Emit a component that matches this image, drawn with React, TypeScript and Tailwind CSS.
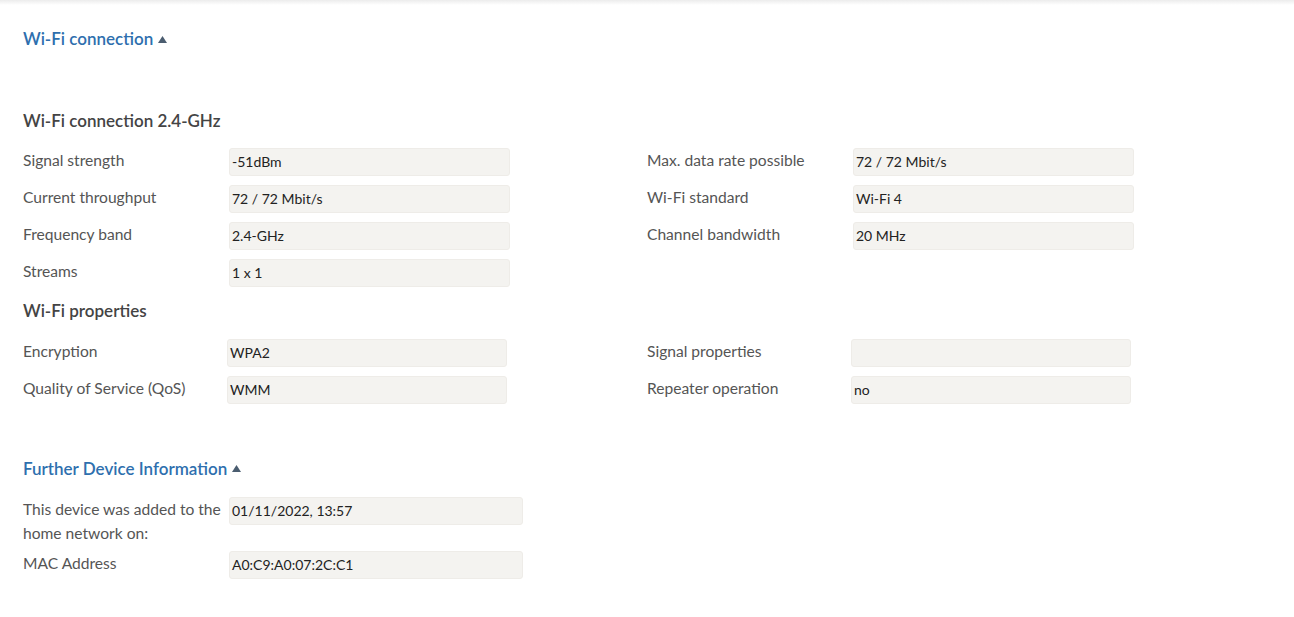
import React from 'react';

type Row = { label: string; value: string };

const left24: Row[] = [
  { label: 'Signal strength', value: '-51dBm' },
  { label: 'Current throughput', value: '72 / 72 Mbit/s' },
  { label: 'Frequency band', value: '2.4-GHz' },
  { label: 'Streams', value: '1 x 1' },
];

const right24: Row[] = [
  { label: 'Max. data rate possible', value: '72 / 72 Mbit/s' },
  { label: 'Wi-Fi standard', value: 'Wi-Fi 4' },
  { label: 'Channel bandwidth', value: '20 MHz' },
];

const leftProps: Row[] = [
  { label: 'Encryption', value: 'WPA2' },
  { label: 'Quality of Service (QoS)', value: 'WMM' },
];

const rightProps: Row[] = [
  { label: 'Signal properties', value: '' },
  { label: 'Repeater operation', value: 'no' },
];

function Field({ label, value, labelW, boxW }: Row & { labelW: string; boxW: string }) {
  return (
    <div className="flex items-start">
      <div className={`${labelW} shrink-0 pt-[1px] text-[15.6px] leading-[23px] text-[#555]`}>{label}</div>
      <div
        className={`${boxW} h-[28px] shrink-0 rounded-[3px] border border-[#eeece8] bg-[#f4f3f0] px-[2px] text-[14px] leading-[26px] text-[#222]`}
      >
        {value}
      </div>
    </div>
  );
}

function Toggle({ title }: { title: string }) {
  return (
    <button type="button" className="flex items-center gap-[5px] text-[17px] font-semibold text-[#2e6fae]">
      <span>{title}</span>
      <svg width="9" height="7" viewBox="0 0 9 7" className="mt-[1px]">
        <path d="M4.5 0L9 7H0z" fill="#4b5d70" />
      </svg>
    </button>
  );
}

function Column({ rows, labelW, boxW }: { rows: Row[]; labelW: string; boxW: string }) {
  return (
    <div className="flex w-[624px] flex-col gap-[9px]">
      {rows.map((r) => (
        <Field key={r.label} {...r} labelW={labelW} boxW={boxW} />
      ))}
    </div>
  );
}

export default function App() {
  return (
    <div className="min-h-[617px] bg-white font-['Lato','Liberation_Sans',sans-serif] text-[#444]">
      <div className="h-[5px] bg-gradient-to-b from-[#ececec] to-white" />
      <div className="px-[23px]">
        <div className="pt-[21px]">
          <Toggle title="Wi-Fi connection" />
        </div>

        <h3 className="mt-[56px] text-[17px] font-semibold text-[#444]">Wi-Fi connection 2.4-GHz</h3>
        <div className="mt-[15px] flex">
          <Column rows={left24} labelW="w-[206px]" boxW="w-[281px]" />
          <Column rows={right24} labelW="w-[206px]" boxW="w-[281px]" />
        </div>

        <h3 className="mt-[11px] text-[17px] font-semibold text-[#444]">Wi-Fi properties</h3>
        <div className="mt-[15px] flex">
          <Column rows={leftProps} labelW="w-[204px]" boxW="w-[280px]" />
          <Column rows={rightProps} labelW="w-[204px]" boxW="w-[280px]" />
        </div>

        <div className="mt-[52px]">
          <Toggle title="Further Device Information" />
        </div>
        <div className="mt-[16px] flex w-[624px] flex-col gap-[6px]">
          <div className="flex items-start">
            <div className="w-[206px] shrink-0 text-[15.6px] leading-[24px] text-[#555]">
              This device was added to the home network on:
            </div>
            <div className="h-[28px] w-[294px] shrink-0 rounded-[3px] border border-[#eeece8] bg-[#f4f3f0] px-[2px] text-[14px] leading-[26px] text-[#222]">
              01/11/2022, 13:57
            </div>
          </div>
          <Field label="MAC Address" value="A0:C9:A0:07:2C:C1" labelW="w-[206px]" boxW="w-[294px]" />
        </div>
      </div>
    </div>
  );
}
